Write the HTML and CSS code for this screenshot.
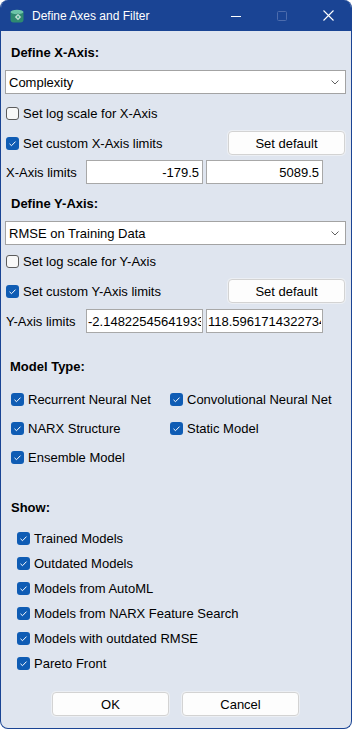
FILE: index.html
```html
<!DOCTYPE html>
<html lang="en">
  <head>
    <meta charset="UTF-8" />
    <meta name="viewport" content="width=device-width, initial-scale=1.0" />
    <title>Define Axes and Filter</title>
    <link rel="stylesheet" href="styles.css">
  </head>
  <body>
    <div class="window">
      <div class="titlebar">
        <svg class="app-icon" width="14" height="14" viewBox="0 0 14 14">
          <rect x="0.5" y="1.5" width="13" height="12" rx="3" fill="#2e8a70" />
          <ellipse cx="7" cy="3" rx="6.5" ry="2.2" fill="#6cc4a8" />
          <path d="M8 4.5 L11.5 8 L8 11.5 L4.5 8 Z" fill="#d8efe6" stroke="#1d6a55" stroke-width="0.6" />
          <path d="M8 6.3 L9.7 8 L8 9.7 L6.3 8 Z" fill="#4fae90" />
        </svg>
        <span class="title">Define Axes and Filter</span>
        <div class="controls">
          <span class="ctl">
            <svg width="10" height="10" viewBox="0 0 10 10"><path d="M0 5.5 H10" stroke="#fff" stroke-width="1" /></svg>
          </span>
          <span class="ctl">
            <svg width="10" height="10" viewBox="0 0 10 10"><rect x="0.5" y="0.5" width="9" height="9" rx="1" fill="none" stroke="#4d6cad" stroke-width="1" /></svg>
          </span>
          <span class="ctl">
            <svg width="11" height="11" viewBox="0 0 11 11"><path d="M0.5 0.5 L10.5 10.5 M10.5 0.5 L0.5 10.5" stroke="#fff" stroke-width="1.1" /></svg>
          </span>
        </div>
      </div>

      <div class="content">
        <div class="section-title first">Define X-Axis:</div>
        <div class="combo">
          <span>Complexity</span>
          <svg class="chevron" width="8" height="5" viewBox="0 0 8 5"><path d="M0.5 0.5 L4 4 L7.5 0.5" fill="none" stroke="#606060" stroke-width="1" /></svg>
        </div>
        <div class="check-row gap-log">
          <span class="box"></span>
          <span>Set log scale for X-Axis</span>
        </div>
        <div class="check-row gap-custom">
          <span class="box checked">
            <svg width="13" height="13" viewBox="0 0 13 13"><path d="M3.5 6.8 L5.5 8.7 L9.5 4.6" fill="none" stroke="#fff" stroke-width="1" /></svg>
          </span>
          <span class="grow">Set custom X-Axis limits</span>
          <button class="btn default-btn">Set default</button>
        </div>
        <div class="limits-row">
          <span class="limits-label">X-Axis limits</span>
          <input class="field right" type="text" value="-179.5" />
          <input class="field right" type="text" value="5089.5" />
        </div>

        <div class="section-title second">Define Y-Axis:</div>
        <div class="combo">
          <span>RMSE on Training Data</span>
          <svg class="chevron" width="8" height="5" viewBox="0 0 8 5"><path d="M0.5 0.5 L4 4 L7.5 0.5" fill="none" stroke="#606060" stroke-width="1" /></svg>
        </div>
        <div class="check-row gap-log2">
          <span class="box"></span>
          <span>Set log scale for Y-Axis</span>
        </div>
        <div class="check-row gap-custom2">
          <span class="box checked">
            <svg width="13" height="13" viewBox="0 0 13 13"><path d="M3.5 6.8 L5.5 8.7 L9.5 4.6" fill="none" stroke="#fff" stroke-width="1" /></svg>
          </span>
          <span class="grow">Set custom Y-Axis limits</span>
          <button class="btn default-btn">Set default</button>
        </div>
        <div class="limits-row gap-limits2">
          <span class="limits-label">Y-Axis limits</span>
          <input class="field left" type="text" value="-2.14822545641933" />
          <input class="field left" type="text" value="118.59617143227348" />
        </div>

        <div class="section-title model">Model Type:</div>
        <div class="model-grid">
          <div class="check-row">
            <span class="box checked"><svg width="13" height="13" viewBox="0 0 13 13"><path d="M3.5 6.8 L5.5 8.7 L9.5 4.6" fill="none" stroke="#fff" stroke-width="1" /></svg></span>
            <span>Recurrent Neural Net</span>
          </div>
          <div class="check-row">
            <span class="box checked"><svg width="13" height="13" viewBox="0 0 13 13"><path d="M3.5 6.8 L5.5 8.7 L9.5 4.6" fill="none" stroke="#fff" stroke-width="1" /></svg></span>
            <span>Convolutional Neural Net</span>
          </div>
          <div class="check-row">
            <span class="box checked"><svg width="13" height="13" viewBox="0 0 13 13"><path d="M3.5 6.8 L5.5 8.7 L9.5 4.6" fill="none" stroke="#fff" stroke-width="1" /></svg></span>
            <span>NARX Structure</span>
          </div>
          <div class="check-row">
            <span class="box checked"><svg width="13" height="13" viewBox="0 0 13 13"><path d="M3.5 6.8 L5.5 8.7 L9.5 4.6" fill="none" stroke="#fff" stroke-width="1" /></svg></span>
            <span>Static Model</span>
          </div>
          <div class="check-row">
            <span class="box checked"><svg width="13" height="13" viewBox="0 0 13 13"><path d="M3.5 6.8 L5.5 8.7 L9.5 4.6" fill="none" stroke="#fff" stroke-width="1" /></svg></span>
            <span>Ensemble Model</span>
          </div>
        </div>

        <div class="section-title show">Show:</div>
        <div class="show-list">
          <div class="check-row">
            <span class="box checked"><svg width="13" height="13" viewBox="0 0 13 13"><path d="M3.5 6.8 L5.5 8.7 L9.5 4.6" fill="none" stroke="#fff" stroke-width="1" /></svg></span>
            <span>Trained Models</span>
          </div>
          <div class="check-row">
            <span class="box checked"><svg width="13" height="13" viewBox="0 0 13 13"><path d="M3.5 6.8 L5.5 8.7 L9.5 4.6" fill="none" stroke="#fff" stroke-width="1" /></svg></span>
            <span>Outdated Models</span>
          </div>
          <div class="check-row">
            <span class="box checked"><svg width="13" height="13" viewBox="0 0 13 13"><path d="M3.5 6.8 L5.5 8.7 L9.5 4.6" fill="none" stroke="#fff" stroke-width="1" /></svg></span>
            <span>Models from AutoML</span>
          </div>
          <div class="check-row">
            <span class="box checked"><svg width="13" height="13" viewBox="0 0 13 13"><path d="M3.5 6.8 L5.5 8.7 L9.5 4.6" fill="none" stroke="#fff" stroke-width="1" /></svg></span>
            <span>Models from NARX Feature Search</span>
          </div>
          <div class="check-row">
            <span class="box checked"><svg width="13" height="13" viewBox="0 0 13 13"><path d="M3.5 6.8 L5.5 8.7 L9.5 4.6" fill="none" stroke="#fff" stroke-width="1" /></svg></span>
            <span>Models with outdated RMSE</span>
          </div>
          <div class="check-row">
            <span class="box checked"><svg width="13" height="13" viewBox="0 0 13 13"><path d="M3.5 6.8 L5.5 8.7 L9.5 4.6" fill="none" stroke="#fff" stroke-width="1" /></svg></span>
            <span>Pareto Front</span>
          </div>
        </div>

        <div class="actions">
          <button class="btn action-btn">OK</button>
          <button class="btn action-btn">Cancel</button>
        </div>
      </div>
    </div>
  </body>
</html>
```

FILE: styles.css
```css
body {
  margin: 0;
  background: #ffffff;
  font-family: "Liberation Sans", Arial, sans-serif;
  font-size: 13px;
  color: #000;
}
.window {
  width: 352px;
  height: 729px;
  box-sizing: border-box;
  border: 1px solid #1a4494;
  border-top: none;
  border-radius: 8px;
  overflow: hidden;
  background: #dfe5ef;
  display: flex;
  flex-direction: column;
}
.titlebar {
  height: 31px;
  background: #1a4494;
  display: flex;
  align-items: center;
  padding-left: 9px;
  color: #fff;
}
.title {
  margin-left: 8px;
  font-size: 12px;
  flex: 1;
}
.controls {
  display: flex;
  height: 100%;
}
.ctl {
  width: 46px;
  display: flex;
  align-items: center;
  justify-content: center;
}
.content {
  display: flex;
  flex-direction: column;
  padding: 0 5px 0 4px;
}
.section-title {
  font-weight: bold;
  line-height: 16px;
  height: 16px;
  padding-left: 6px;
}
.section-title.first {
  margin-top: 14px;
}
.section-title.second {
  margin-top: 12px;
}
.section-title.model {
  margin-top: 26px;
  padding-left: 5px;
}
.section-title.show {
  margin-top: 31px;
  padding-left: 6px;
}
.combo {
  margin-top: 9px;
  height: 24px;
  box-sizing: border-box;
  border: 1px solid #a3a3a3;
  background: #fff;
  display: flex;
  align-items: center;
  padding: 0 6px 0 3px;
  justify-content: space-between;
}
.check-row {
  height: 24px;
  display: flex;
  align-items: center;
  padding-left: 1px;
}
.box {
  width: 13px;
  height: 13px;
  box-sizing: border-box;
  border: 1px solid #5c5c5c;
  border-radius: 3px;
  background: #f8f8f8;
  margin-right: 4px;
  flex-shrink: 0;
  display: flex;
}
.box.checked {
  border: none;
  background: #0f5cb4;
}
.grow {
  flex: 1;
}
.gap-log {
  margin-top: 7px;
}
.gap-custom {
  margin-top: 6px;
}
.gap-log2 {
  margin-top: 4px;
}
.gap-custom2 {
  margin-top: 6px;
}
.btn {
  font-family: "Liberation Sans", Arial, sans-serif;
  font-size: 13px;
  color: #000;
  background: #fdfdfd;
  border: 1px solid #d3d3d3;
  border-radius: 4px;
  box-shadow: 0 0 0 1px #eceff4;
  height: 24px;
  padding: 0;
}
.default-btn {
  width: 117px;
  margin-right: 1px;
}
.limits-row {
  margin-top: 5px;
  height: 24px;
  display: flex;
  align-items: center;
  padding-left: 1px;
}
.gap-limits2 {
  margin-top: 6px;
}
.limits-label {
  width: 80px;
}
.field {
  width: 117px;
  height: 24px;
  box-sizing: border-box;
  border: 1px solid #a8a8a8;
  background: #fff;
  font-family: "Liberation Sans", Arial, sans-serif;
  font-size: 13px;
  color: #000;
  margin: 0 3px 0 0;
  outline: none;
}
.field.right {
  text-align: right;
  padding: 0 3px 0 2px;
}
.field.left {
  text-align: left;
  padding: 0 1px 0 1px;
}
.model-grid {
  margin-top: 12px;
  display: grid;
  grid-template-columns: 159px 1fr;
  row-gap: 5px;
  padding-left: 5px;
}
.show-list {
  margin-top: 10px;
  display: flex;
  flex-direction: column;
  gap: 1px;
  padding-left: 11px;
}
.actions {
  margin-top: 17px;
  display: flex;
  justify-content: center;
  gap: 13px;
}
.action-btn {
  width: 117px;
}
```
